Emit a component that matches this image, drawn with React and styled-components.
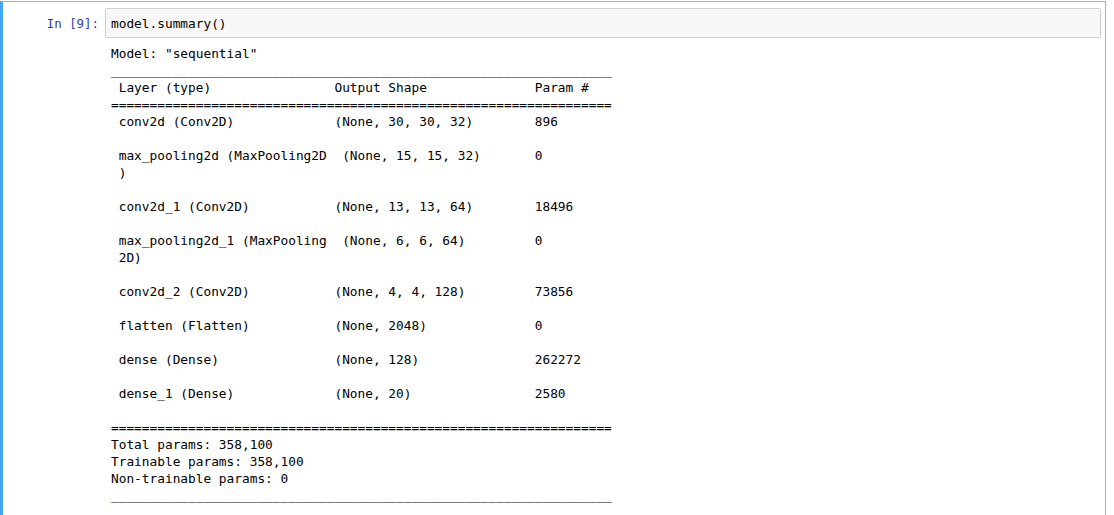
import React from 'react'
import styled, { createGlobalStyle } from 'styled-components'

const GlobalStyle = createGlobalStyle`
    html, body {
        margin:0;
        padding:0;
        background:#fff;
        overflow:hidden;
    }
    body{
        font-family:"DejaVu Sans Mono", monospace;
    }
`

const summary = [
    'Model: "sequential"',
    '_________________________________________________________________',
    ' Layer (type)                Output Shape              Param #   ',
    '=================================================================',
    ' conv2d (Conv2D)             (None, 30, 30, 32)        896       ',
    '                                                                 ',
    ' max_pooling2d (MaxPooling2D  (None, 15, 15, 32)       0         ',
    ' )                                                               ',
    '                                                                 ',
    ' conv2d_1 (Conv2D)           (None, 13, 13, 64)        18496     ',
    '                                                                 ',
    ' max_pooling2d_1 (MaxPooling  (None, 6, 6, 64)         0         ',
    ' 2D)                                                             ',
    '                                                                 ',
    ' conv2d_2 (Conv2D)           (None, 4, 4, 128)         73856     ',
    '                                                                 ',
    ' flatten (Flatten)           (None, 2048)              0         ',
    '                                                                 ',
    ' dense (Dense)               (None, 128)               262272    ',
    '                                                                 ',
    ' dense_1 (Dense)             (None, 20)                2580      ',
    '                                                                 ',
    '=================================================================',
    'Total params: 358,100',
    'Trainable params: 358,100',
    'Non-trainable params: 0',
    '_________________________________________________________________',
]

function App() {
    return (
        <Page>
            <GlobalStyle />
            <Cell>
                <Row>
                    <Prompt>In&nbsp;[9]:</Prompt>
                    <InputArea>
                        <Code>model.summary()</Code>
                    </InputArea>
                </Row>
                <Row>
                    <Prompt />
                    <Output>{summary.join('\n')}</Output>
                </Row>
            </Cell>
        </Page>
    )
}

export default App

const Page = styled.div`
    width:1114px;
    padding-top:1px;
    box-sizing:border-box;
`

const Cell = styled.div`
    width:1106px;
    box-sizing:border-box;
    border:1px solid #ababab;
    border-left:3px solid #42a5f5;
    border-bottom:none;
    padding:6px 4px 40px 6px;
    display:flex;
    flex-direction:column;
    gap:7px;
`

const Row = styled.div`
    display:flex;
    align-items:flex-start;
`

const Prompt = styled.div`
    flex:0 0 96px;
    box-sizing:border-box;
    padding:7px 6px 0 0;
    text-align:right;
    color:#303f9f;
    font-family:"DejaVu Sans Mono", monospace;
    font-size:12.4px;
    line-height:17px;
`

const InputArea = styled.div`
    flex:1;
    height:30px;
    box-sizing:border-box;
    background:#f7f7f7;
    border:1px solid #cfcfcf;
    border-radius:2px;
    padding:6px 5px 5px 5px;
`

const Code = styled.div`
    font-family:"DejaVu Sans Mono", monospace;
    font-size:12.8px;
    line-height:17px;
    color:#000;
    white-space:pre;
`

const Output = styled.pre`
    margin:0;
    padding-left:6px;
    font-family:"DejaVu Sans Mono", monospace;
    font-size:12.8px;
    line-height:17px;
    color:#000;
    white-space:pre;
`
